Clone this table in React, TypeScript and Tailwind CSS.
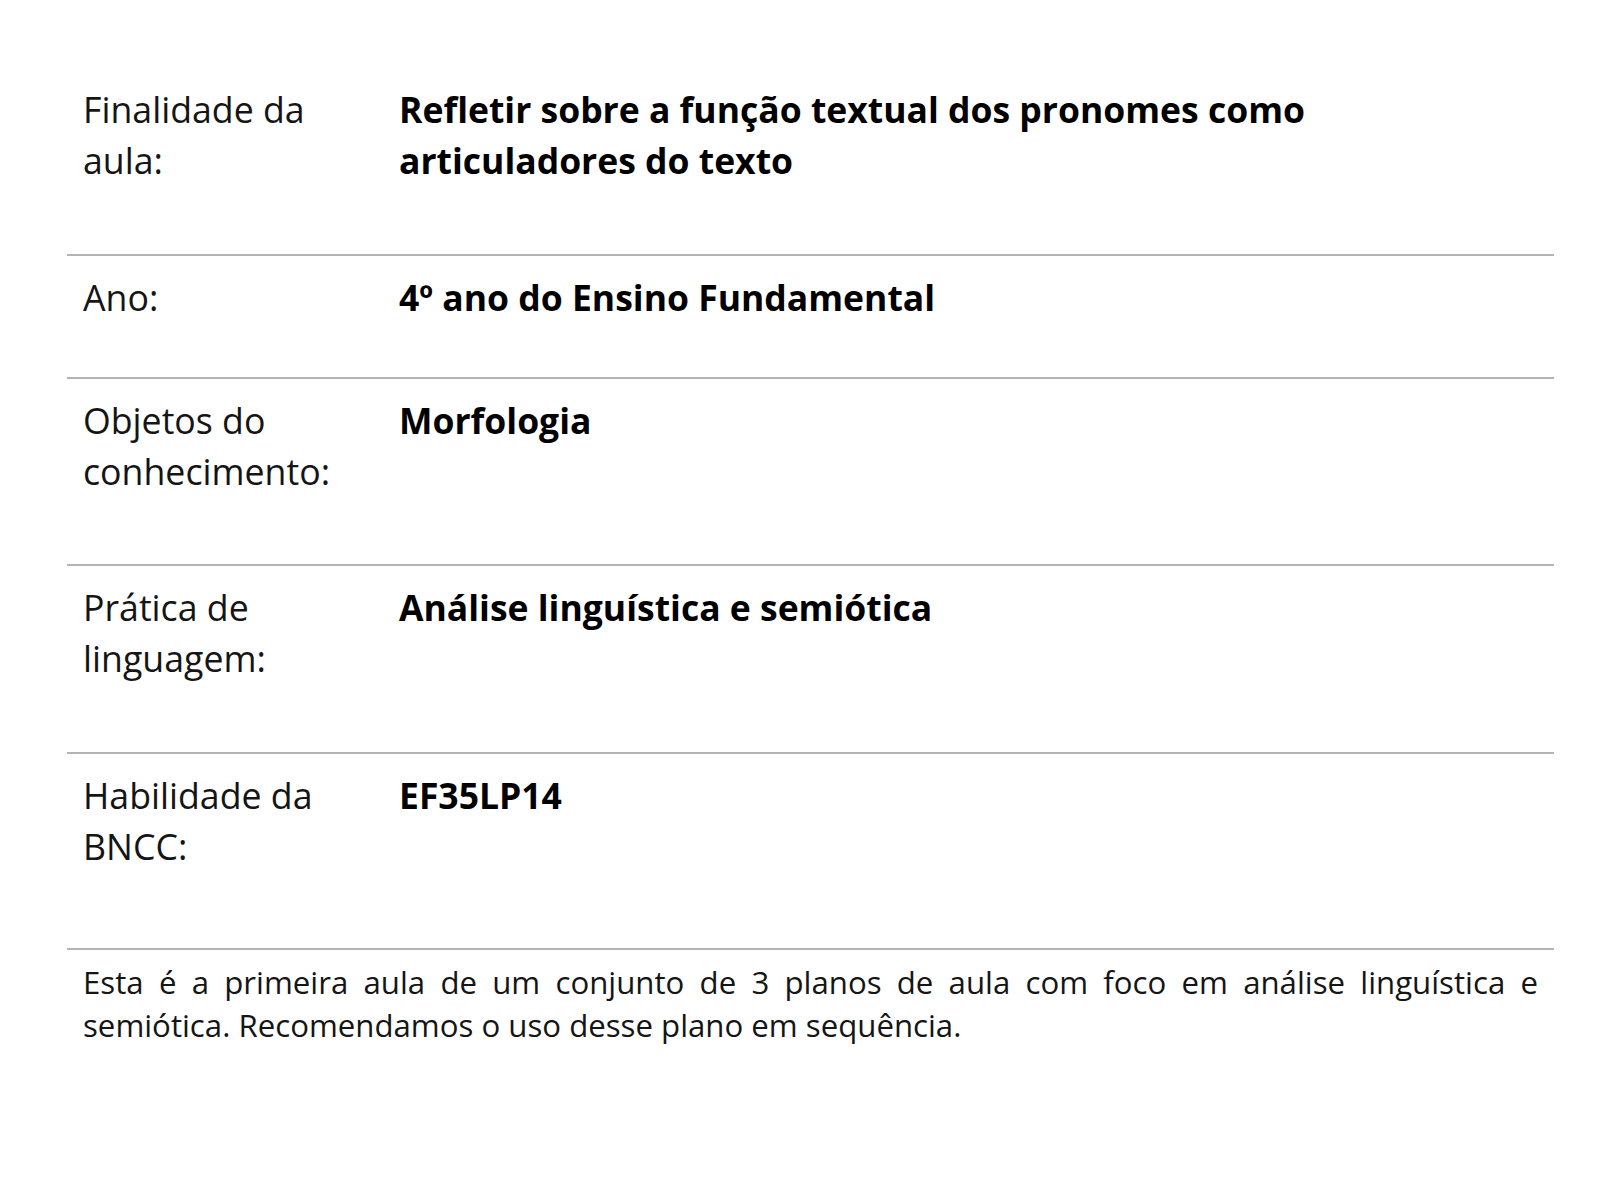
import React from "react";

const rows: { label: string[]; value: React.ReactNode; pb: string }[] = [
  {
    label: ["Finalidade da", "aula:"],
    value: (
      <>
        Refletir sobre a função textual dos pronomes como
        <br />
        articuladores do texto
      </>
    ),
    pb: "pb-[68px]",
  },
  { label: ["Ano:"], value: "4º ano do Ensino Fundamental", pb: "pb-[54px]" },
  { label: ["Objetos do", "conhecimento:"], value: "Morfologia", pb: "pb-[67px]" },
  { label: ["Prática de", "linguagem:"], value: "Análise linguística e semiótica", pb: "pb-[68px]" },
  { label: ["Habilidade da", "BNCC:"], value: "EF35LP14", pb: "pb-[76px]" },
];

export default function App() {
  return (
    <div
      className="min-h-[1200px] w-[1600px] bg-white pt-[68px]"
      style={{ fontFamily: '"Open Sans", "Noto Sans", sans-serif' }}
    >
      <div className="ml-[67px] w-[1487px]">
        {rows.map((r, i) => (
          <div
            key={i}
            className={`grid grid-cols-[316px_1fr] border-b-2 border-[#b4b4b4] px-[16px] pt-[16px] ${r.pb} text-[35.7px] leading-[51px] text-[#151515]`}
          >
            <div>
              {r.label.map((l, j) => (
                <div key={j}>{l}</div>
              ))}
            </div>
            <div className="text-[35.5px] font-bold text-black">{r.value}</div>
          </div>
        ))}
        <p className="px-[16px] pt-[11px] text-justify text-[31.2px] leading-[43px] text-[#151515]">
          Esta é a primeira aula de um conjunto de 3 planos de aula com foco em análise linguística e
          semiótica. Recomendamos o uso desse plano em sequência.
        </p>
      </div>
    </div>
  );
}
